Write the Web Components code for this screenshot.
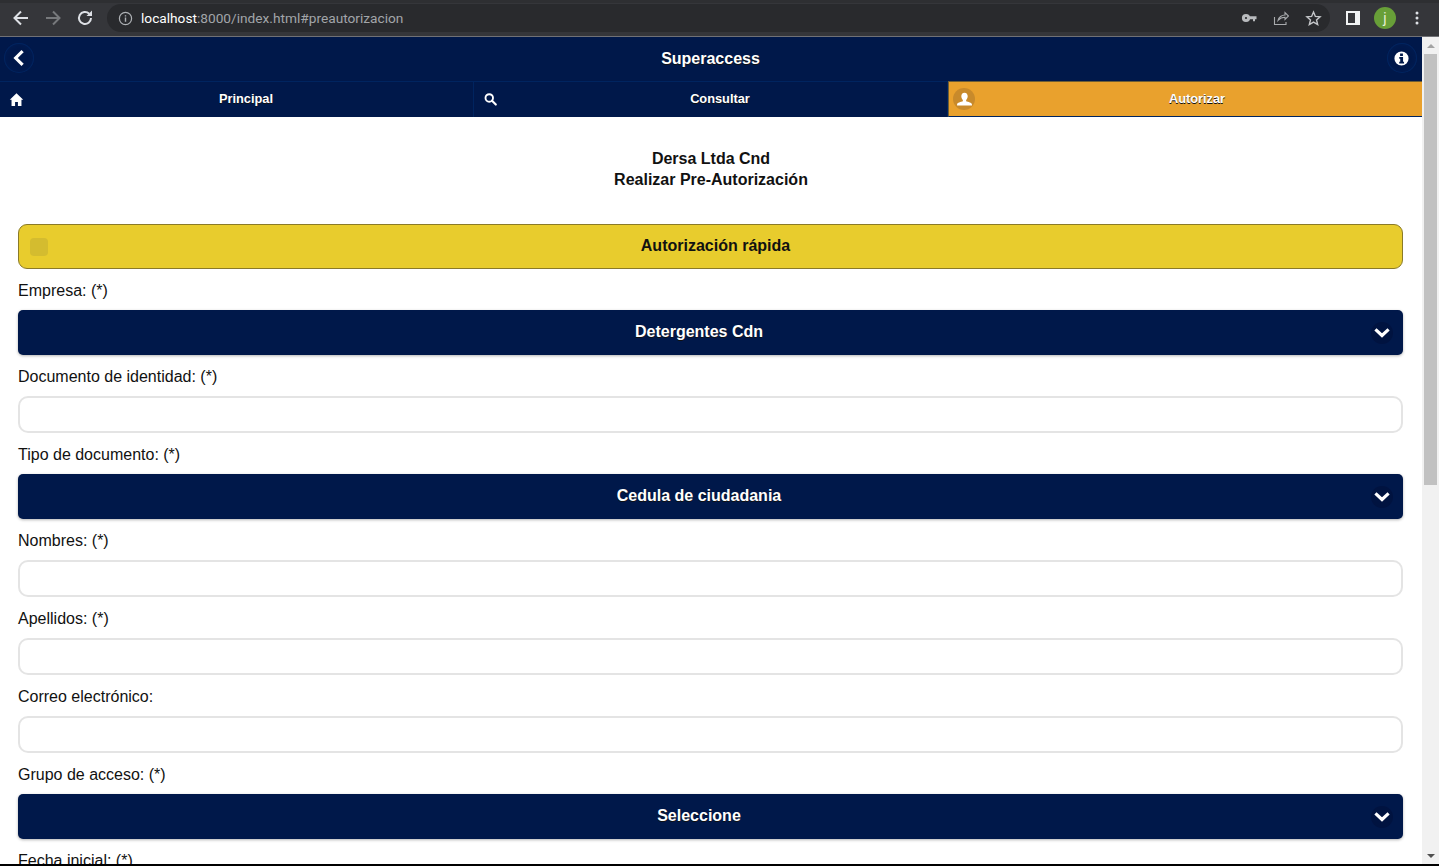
<!DOCTYPE html>
<html lang="es"><head><meta charset="utf-8"><title>Superaccess</title>
<style>
html,body{margin:0;height:866px;overflow:hidden;background:#000;font-family:"Liberation Sans",Arial,sans-serif}
</style></head><body>
<app-root></app-root>
<script>
const I={
 back:'<path d="M20 5l-7 7 7 7" transform="translate(-5 0)" fill="none" stroke="currentColor" stroke-width="3.8" stroke-linecap="square"/>',
 down:'<path d="M5.500 9l6.500 6 6.500-6" fill="none" stroke="currentColor" stroke-width="3.8" stroke-linecap="square"/>',
 home:'<path fill="currentColor" d="M12 3L21.500 12.500H19V21H14V15.500H10V21H5V12.500H2.500z"/>',
 search:'<circle cx="10" cy="9.500" r="6" fill="none" stroke="currentColor" stroke-width="3"/><path d="M14.500 14l6 6" stroke="currentColor" stroke-width="3.400" stroke-linecap="round"/>',
 user:'<path fill="currentColor" d="M12 2.500c-3 0-4.500 2.300-4.500 5 0 2.200.9 4 2.200 5.200v1.600C7 15.500 1.500 16 1.500 19v1.500h21V19c0-3-5.500-3.500-8.200-4.700v-1.600c1.300-1.200 2.200-3 2.200-5.200 0-2.700-1.500-5-4.500-5z"/>',
 info:'<path fill="currentColor" fill-rule="evenodd" d="M12 2a10 10 0 1 0 0 20 10 10 0 0 0 0-20zM10 5h4v3.400h-4zM8.800 10h5.400v6.600h1.400V19H8.800v-2.400h1.400v-4.200H8.800z"/>'
};
function def(name,html){customElements.define(name,class extends HTMLElement{connectedCallback(){if(this.shadowRoot)return;const r=this.attachShadow({mode:'open'});r.innerHTML=typeof html==='function'?html(this):html;}})}
const ic=(n,s)=>`<svg viewBox="0 0 24 24" width="${s}" height="${s}" style="display:block">${I[n]}</svg>`;

def('browser-bar',`<style>
:host{display:flex;align-items:center;height:37px;box-sizing:border-box;background:#35363a;box-shadow:inset 0 3px 0 #2e2f32;border-bottom:1px solid #707176;color:#dee1e6;flex:none;font:13px "Roboto","Liberation Sans",sans-serif}
.b{width:32px;display:flex;justify-content:center;flex:none}
.nav{display:flex;padding-left:5px;margin-right:6px}
.omni{flex:1;height:28px;background:#292a2d;border-radius:14px;display:flex;align-items:center;padding:0 1px 0 11px}
.url{margin-left:8px;color:#a2a5a9;font-size:13.700px;white-space:nowrap}
.url b{font-weight:400;color:#fff}
.sp{flex:1}
.right{display:flex;align-items:center;width:109px;flex:none}
.av{width:22px;height:22px;border-radius:50%;background:#689f38;color:#e8f0d8;text-align:center;line-height:22px;font-size:14px;margin-left:5px;flex:none}
</style>
<div class="nav">
<div class="b"><svg width="18" height="18" viewBox="0 0 18 18"><path d="M16 9H3M9 2.500L2.500 9 9 15.500" fill="none" stroke="#dee1e6" stroke-width="2"/></svg></div>
<div class="b"><svg width="18" height="18" viewBox="0 0 18 18"><path d="M2 9h13M9 2.500L15.500 9 9 15.500" fill="none" stroke="#77797c" stroke-width="2"/></svg></div>
<div class="b"><svg width="18" height="18" viewBox="0 0 18 18"><path d="M15 9a6 6 0 1 1-1.800-4.300" fill="none" stroke="#dee1e6" stroke-width="2"/><path d="M16 1.500V7h-5.500z" fill="#dee1e6"/></svg></div>
</div>
<div class="omni">
<svg width="15" height="15" viewBox="0 0 16 16"><circle cx="8" cy="8" r="6.500" fill="none" stroke="#aeb1b5" stroke-width="1.300"/><path d="M8 7v4.500M8 4.500v1.400" stroke="#aeb1b5" stroke-width="1.500"/></svg>
<span class="url"><b>localhost</b>:8000/index.html#preautorizacion</span><span class="sp"></span>
<div class="b"><svg width="16" height="16" viewBox="0 0 16 16"><circle cx="5" cy="8" r="2.600" fill="none" stroke="#b9bbbe" stroke-width="3"/><path d="M8 6.200h7.500v3H14v2h-2v-2H8z" fill="#b9bbbe"/></svg></div>
<div class="b"><svg width="16" height="16" viewBox="0 0 16 16"><path d="M1.500 7v7.500H13V12M5 10.500C5.500 7 9 5 12 5V2.500L15.500 6 12 9.500V7.300C9.500 7.300 7 8.300 5 10.500z" fill="none" stroke="#a9abae" stroke-width="1.100"/></svg></div>
<div class="b"><svg width="17" height="17" viewBox="0 0 18 18"><path d="M9 2.200l2 4.600 5 .5-3.800 3.300 1.200 4.900L9 12.900l-4.400 2.600 1.200-4.900L2 7.300l5-.5z" fill="none" stroke="#c4c6c9" stroke-width="1.500"/></svg></div>
</div>
<div class="right">
<div class="b" style="margin-left:7px"><svg width="14" height="14" viewBox="0 0 14 14"><path fill="#f1f3f4" fill-rule="evenodd" d="M0 0h14v14H0zM2 2v10h7V2z"/></svg></div>
<div class="av">j</div>
<div class="b" style="margin-left:5px"><svg width="4" height="14" viewBox="0 0 4 14"><circle cx="2" cy="2" r="1.500" fill="#dee1e6"/><circle cx="2" cy="7" r="1.500" fill="#dee1e6"/><circle cx="2" cy="12" r="1.500" fill="#dee1e6"/></svg></div>
</div>`);

def('round-icon',h=>`<style>
:host{display:flex;width:30px;height:30px;border-radius:50%;align-items:center;justify-content:center;background:${h.getAttribute('bg')||'transparent'};box-shadow:${h.getAttribute('ring')?'inset 0 0 0 1px #00245f, inset 0 0 6px #001f58':'none'};color:#fff;flex:none}
</style>${ic(h.getAttribute('name'),+h.getAttribute('size')||16)}`);

def('app-header',`<style>
:host{display:flex;align-items:center;justify-content:space-between;height:44px;box-sizing:border-box;padding:0 5px 2px 4px;background:#00184a;color:#fff;font-weight:700;font-size:16px}
h1{margin:2px 0 0;font:inherit;text-shadow:0 1px 0 #111}
</style><round-icon name="back" ring="1" size="20"></round-icon><h1>Superaccess</h1><round-icon name="info" ring="1" size="17"></round-icon>`);

def('nav-tab',h=>`<style>
:host{min-width:0;position:relative;display:flex;align-items:center;justify-content:center;box-sizing:border-box;height:36px;padding:0 0 2px 19px;border-top:1px solid #00245f;border-right:1px solid #00245f;font-size:12.800px;font-weight:700;color:#fff;text-shadow:0 1px 0 #111;background:${h.hasAttribute('active')?'#e9a12d':'#00184a'}}
:host([active]){border-top-color:#6e5e35;border-left:1px solid #6e5e35;border-right:0;border-bottom:1px solid #00245f;padding-left:23px}
.i{position:absolute;left:5px;top:6px;width:22px;height:22px;border-radius:50%;display:flex;align-items:center;justify-content:center;background:${h.hasAttribute('active')?'#c88a2b':'transparent'};text-shadow:none}
:host([active]) .i{left:4px}
</style><span class="i">${ic(h.getAttribute('icon'),h.getAttribute('icon')=='search'?15:17)}</span><slot></slot>`);

def('app-nav',`<style>:host{display:grid;grid-template-columns:repeat(3,minmax(0,1fr))}</style><slot></slot>`);

def('quick-check',`<style>
:host{display:flex;align-items:center;justify-content:center;position:relative;box-sizing:border-box;height:45px;padding:0 0 2px 10px;background:#e8cc2d;border:1px solid #8a7a28;border-radius:9px;font-weight:700;font-size:16px;color:#111}
.c{position:absolute;left:11px;top:13px;width:18px;height:18px;border-radius:4px;background:#d4bc2f}
</style><span class="c"></span><slot></slot>`);

def('field-label',`<style>:host{display:block;font-size:16px;line-height:20px;color:#111;margin:12px 0 9px}</style><slot></slot>`);

def('select-box',`<style>
:host{display:flex;align-items:center;justify-content:center;position:relative;box-sizing:border-box;height:45px;padding:0 23px 2px 0;background:#00184a;border-radius:5px;box-shadow:0 1px 3px rgba(0,0,0,.3);font-weight:700;font-size:16px;color:#fff;text-shadow:0 1px 0 #111}
round-icon{position:absolute;right:10px;top:12px;width:22px;height:22px}
</style><slot></slot><round-icon name="down" size="20" bg="#001340"></round-icon>`);

def('text-box',`<style>
:host{display:block;height:37px;box-sizing:border-box;background:#fff;border:2px solid #e4e4e4;border-radius:10px}
input{display:block;width:100%;height:100%;box-sizing:border-box;border:0;background:transparent;outline:0;padding:0 10px}
</style><input type="text">`);

def('page-title',`<style>:host{display:block;text-align:center;font-weight:700;font-size:16px;line-height:21px;color:#111;padding:31px 0 34px}</style><slot></slot>`);

def('side-scroll',`<style>
:host{display:flex;flex-direction:column;width:17px;flex:none;background:#f1f1f1}
.a{height:17px;display:flex;align-items:center;justify-content:center;flex:none}
.t{height:431px;background:#c1c1c1;margin:0 2px}
.s{flex:1}
</style><div class="a"><svg width="8" height="4" viewBox="0 0 8 4"><path d="M4 0l4 4H0z" fill="#a3a3a3"/></svg></div><div class="t"></div><div class="s"></div><div class="a"><svg width="8" height="4" viewBox="0 0 8 4"><path d="M4 4L8 0H0z" fill="#505050"/></svg></div>`);

def('form-area',`<style>:host{display:block;padding:0 19px 0 18px}</style><slot></slot>`);

def('app-root',`<style>
:host{display:flex;flex-direction:column;height:864px;overflow:hidden;background:#fff}
.view{flex:1;display:flex;min-height:0}
main{flex:1;min-width:0;overflow:hidden}
</style>
<browser-bar></browser-bar>
<div class="view"><main>
<app-header></app-header>
<app-nav><nav-tab icon="home">Principal</nav-tab><nav-tab icon="search">Consultar</nav-tab><nav-tab icon="user" active>Autorizar</nav-tab></app-nav>
<page-title>Dersa Ltda Cnd<br>Realizar Pre-Autorización</page-title>
<form-area>
<quick-check>Autorización rápida</quick-check>
<field-label>Empresa: (*)</field-label><select-box>Detergentes Cdn</select-box>
<field-label>Documento de identidad: (*)</field-label><text-box></text-box>
<field-label>Tipo de documento: (*)</field-label><select-box>Cedula de ciudadania</select-box>
<field-label>Nombres: (*)</field-label><text-box></text-box>
<field-label>Apellidos: (*)</field-label><text-box></text-box>
<field-label>Correo electrónico:</field-label><text-box></text-box>
<field-label>Grupo de acceso: (*)</field-label><select-box>Seleccione</select-box>
<field-label>Fecha inicial: (*)</field-label>
</form-area>
</main><side-scroll></side-scroll></div>`);
</script></body></html>
